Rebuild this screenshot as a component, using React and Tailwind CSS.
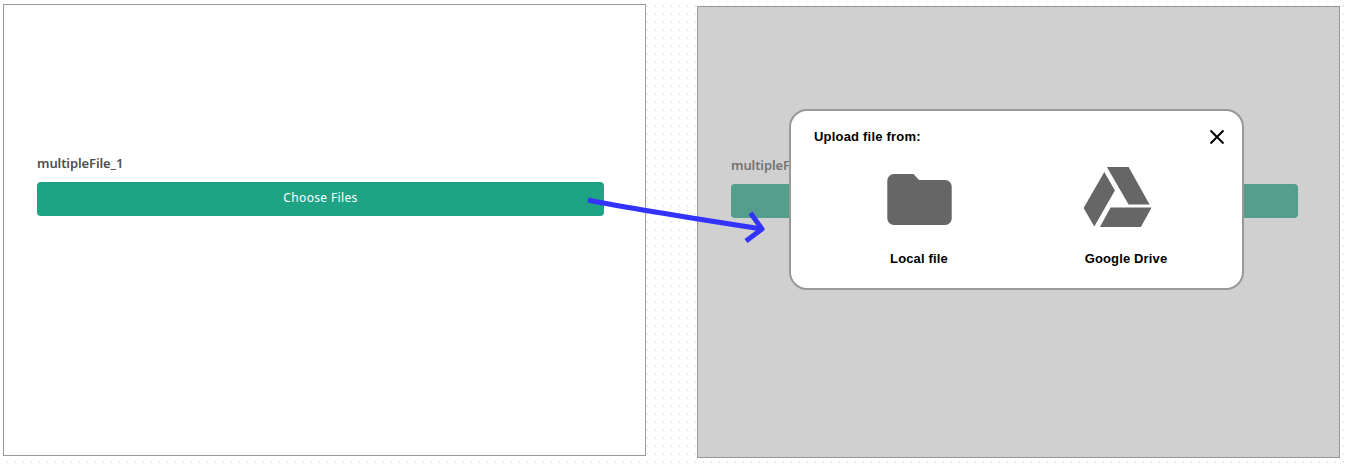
import React from "react";

function FilePanel({ dimmed = false, children }) {
  const frame = dimmed ? "bg-[#d0d0d0] mt-[6px]" : "bg-white mt-1";
  const label = dimmed ? "text-[#747272]" : "text-[#514e4e]";
  const button = dimmed ? "bg-[#559e8e] text-[#d0d0d0]" : "bg-[#1ea384] text-white";
  return (
    <section
      className={`relative h-[452px] w-[643px] shrink-0 border border-[#999999] px-[33px] pt-[148px] font-["Noto_Sans",sans-serif] ${frame}`}
    >
      <div
        className={`h-[29px] text-[13px] leading-[20px] font-semibold tracking-[-0.1px] whitespace-nowrap ${label}`}
      >
        multipleFile_1
      </div>
      <button
        className={`flex h-[34px] w-[567px] items-center justify-center rounded-[4px] pb-[3px] text-[12px] tracking-[0.35px] ${button}`}
      >
        Choose Files
      </button>
      {children}
    </section>
  );
}

function FolderIcon() {
  return (
    <svg width="66" height="54" viewBox="0 0 66 54" className="block">
      <path
        d="M7.8 1H27.5L33 7H59.2A6.5 6.5 0 0 1 65.7 13.5V45.5A6.5 6.5 0 0 1 59.2 52H7.8A6.5 6.5 0 0 1 1.3 45.5V7.5A6.5 6.5 0 0 1 7.8 1Z"
        fill="#666666"
      />
    </svg>
  );
}

function DriveIcon() {
  return (
    <svg width="69" height="60" viewBox="-0.6 0 69 60" className="block" fill="#666666">
      <path d="M23.3 0H45L66 37.5H45Z" />
      <path d="M20.7 5L31.3 23.5L10.7 59.5L0 41Z" />
      <path d="M27 40.5H68L57.3 60H16.3Z" />
    </svg>
  );
}

function UploadDialog() {
  return (
    <div
      role="dialog"
      className='absolute top-[102px] left-[91px] h-[181px] w-[455px] rounded-[18px] border-2 border-[#999999] bg-white font-["Liberation_Sans",Arial,sans-serif] text-[13px] font-bold text-black'
    >
      <div className="flex justify-between pt-[18px] pr-[17px] pl-[23px]">
        <h2 className="leading-[16px] tracking-[0.2px]">Upload file from:</h2>
        <button aria-label="Close" className="h-4 w-4">
          <svg width="16" height="16" viewBox="0 0 16 16" className="block">
            <path d="M1.5 1.5L14.5 14.5M14.5 1.5L1.5 14.5" stroke="#000" strokeWidth="2" />
          </svg>
        </button>
      </div>
      <div className="flex pl-[78px]">
        <button className="flex w-[100px] flex-col items-center pt-[28px]">
          <FolderIcon />
          <span className="mt-[24px] leading-[16px] tracking-[0.15px]">Local file</span>
        </button>
        <button className="ml-[98px] flex w-[118px] flex-col items-center pt-[22px]">
          <span className="mr-[17px]">
            <DriveIcon />
          </span>
          <span className="mt-[24px] leading-[16px] tracking-[0.15px]">Google Drive</span>
        </button>
      </div>
    </div>
  );
}

export default function App() {
  return (
    <main className="relative flex h-[464px] w-[1346px] items-start gap-[51px] overflow-hidden bg-white bg-[linear-gradient(#fff_5px,transparent_5px,transparent_7px,#fff_7px),linear-gradient(90deg,#fff_7px,#e4e4e4_7px)] bg-[length:8px_8px] pl-[3px]">
      <FilePanel />
      <FilePanel dimmed>
        <UploadDialog />
      </FilePanel>
      <svg
        width="190"
        height="60"
        viewBox="580 190 190 60"
        className="pointer-events-none absolute top-[190px] left-[580px]"
        fill="none"
        stroke="#3333ff"
        strokeWidth="5"
      >
        <path d="M588 200Q632 209 762 229" />
        <path d="M750.5 213L762 229L746 241" strokeLinejoin="round" />
      </svg>
    </main>
  );
}
